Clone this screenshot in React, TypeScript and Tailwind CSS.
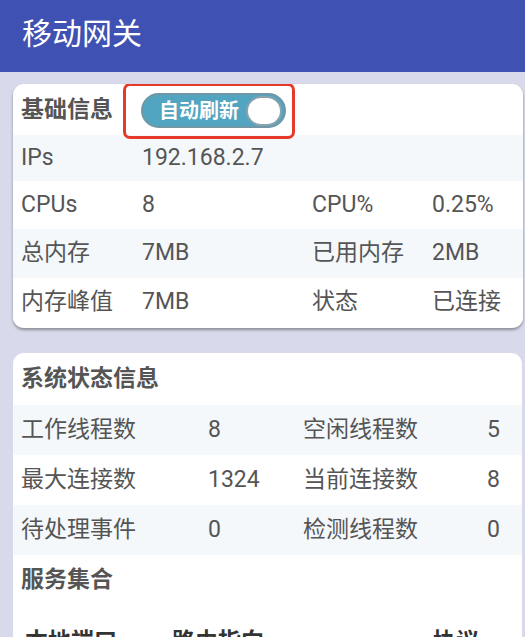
const FONT = "font-['Roboto','Noto_Sans_CJK_SC',sans-serif]";

const BASIC = [
  { k1: "IPs", v1: "192.168.2.7", k2: "", v2: "", h: "h-[46px]", alt: true },
  { k1: "CPUs", v1: "8", k2: "CPU%", v2: "0.25%", h: "h-[48px]", alt: false },
  { k1: "总内存", v1: "7MB", k2: "已用内存", v2: "2MB", h: "h-[49px]", alt: true },
  { k1: "内存峰值", v1: "7MB", k2: "状态", v2: "已连接", h: "h-[48px]", alt: false },
];

const STATUS = [
  { k1: "工作线程数", v1: "8", k2: "空闲线程数", v2: "5", alt: true },
  { k1: "最大连接数", v1: "1324", k2: "当前连接数", v2: "8", alt: false },
  { k1: "待处理事件", v1: "0", k2: "检测线程数", v2: "0", alt: true },
];

function Toggle() {
  // red annotation box around the switch
  return (
    <div className="ml-[10px] flex h-[56px] w-[172px] items-center rounded-[7px] border-[3px] border-[#e5392a] pl-[15px]">
      <div className="flex h-[35px] w-[145px] items-center justify-between rounded-full border-2 border-[#6f97a6] bg-[#52a5c0] pl-[16px] pr-[2px]">
        <span className="text-[20px] font-bold leading-none text-white">自动刷新</span>
        <span className="h-[30px] w-[36px] rounded-full border-2 border-[#8aa3ad] bg-white" />
      </div>
    </div>
  );
}

export default function App() {
  return (
    <div className={`${FONT} h-[637px] w-[525px] overflow-hidden bg-[#d8d9ea] text-[#555]`}>
      <div className="flex h-[72px] items-center bg-[#3f51b2] pb-[5px] pl-[22px]">
        <h1 className="text-[30px] leading-none text-white">移动网关</h1>
      </div>

      {/* 基础信息 */}
      <div className="ml-[13px] mt-[12px] w-[510px] overflow-hidden rounded-[11px] bg-white shadow-[0_2px_3px_rgba(0,0,0,0.35)]">
        <div className="flex h-[51px] items-center pl-[8px] pt-[2px]">
          <span className="text-[23px] font-bold">基础信息</span>
          <Toggle />
        </div>
        {BASIC.map((r) => (
          <div
            key={r.k1}
            className={`grid grid-cols-[121px_170px_120px_1fr] items-center pl-[8px] text-[23px] ${r.h} ${r.alt ? "bg-[#f4f8fb]" : "bg-white"}`}
          >
            <span>{r.k1}</span>
            <span>{r.v1}</span>
            <span>{r.k2}</span>
            <span>{r.v2}</span>
          </div>
        ))}
        <div className="h-[2px]" />
      </div>

      {/* 系统状态信息 */}
      <div className="ml-[13px] mt-[25px] w-[509px] rounded-t-[11px] bg-white">
        <div className="flex h-[52px] items-center pl-[8px]">
          <span className="text-[23px] font-bold">系统状态信息</span>
        </div>
        {STATUS.map((r) => (
          <div
            key={r.k1}
            className={`grid h-[50px] grid-cols-[187px_95px_1fr_auto] items-center pl-[8px] pr-[22px] text-[23px] ${r.alt ? "bg-[#f4f8fb]" : "bg-white"}`}
          >
            <span>{r.k1}</span>
            <span>{r.v1}</span>
            <span>{r.k2}</span>
            <span>{r.v2}</span>
          </div>
        ))}
        <div className="flex h-[50px] items-center pl-[8px]">
          <span className="text-[23px] font-bold">服务集合</span>
        </div>
        <div className="grid grid-cols-[147px_261px_1fr] pl-[12px] pt-[20px] text-[23px] font-bold text-[#333]">
          <span>本地端口</span>
          <span>路由指向</span>
          <span>协议</span>
        </div>
      </div>
    </div>
  );
}
